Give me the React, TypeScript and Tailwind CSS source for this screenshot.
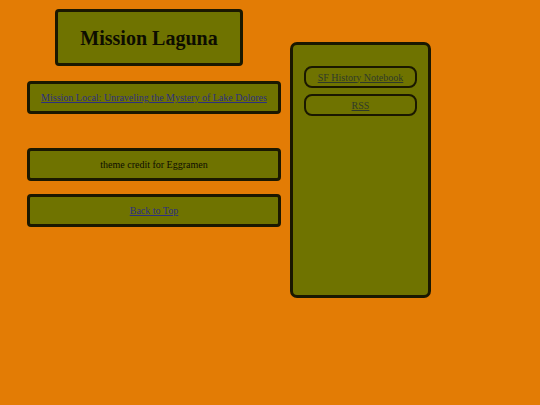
import React from 'react';

const box = 'bg-[#6f7300] border-[3px] border-[#1a1800] rounded-[4px]';

export default function App() {
  return (
    <div className="w-[540px] h-[405px] bg-[#e37c05] [font-family:'Liberation_Serif',serif] text-[#0d0d00] overflow-hidden">
      <div className="flex items-start pl-[27px] pt-[9px] gap-[9px]">
        <div className="w-[254px] flex flex-col">
          <div className={`${box} ml-[28px] w-[188px] h-[57px] flex items-center justify-center`}>
            <h1 className="text-[20px] font-bold">Mission Laguna</h1>
          </div>
          <div className={`${box} mt-[15px] h-[33px] flex items-center justify-center`}>
            <a href="#" className="text-[10px] underline text-[#2d2f80] whitespace-nowrap">Mission Local: Unraveling the Mystery of Lake Dolores</a>
          </div>
          <div className={`${box} mt-[34px] h-[33px] flex items-center justify-center`}>
            <span className="text-[10px]">theme credit for Eggramen</span>
          </div>
          <div className={`${box} mt-[13px] h-[33px] flex items-center justify-center`}>
            <a href="#" className="text-[10px] underline text-[#2d2f80]">Back to Top</a>
          </div>
        </div>
        <div className="mt-[33px] w-[141px] h-[256px] bg-[#6f7300] border-[3px] border-[#1a1800] rounded-[7px] px-[11px] pt-[21px] flex flex-col gap-[6px]">
          <div className="h-[22px] border-2 border-[#1a1800] rounded-[8px] flex items-center justify-center">
            <a href="#" className="text-[10px] underline text-[#2f3a2a]">SF History Notebook</a>
          </div>
          <div className="h-[22px] border-2 border-[#1a1800] rounded-[8px] flex items-center justify-center">
            <a href="#" className="text-[10px] underline text-[#2f3a2a]">RSS</a>
          </div>
        </div>
      </div>
    </div>
  );
}
